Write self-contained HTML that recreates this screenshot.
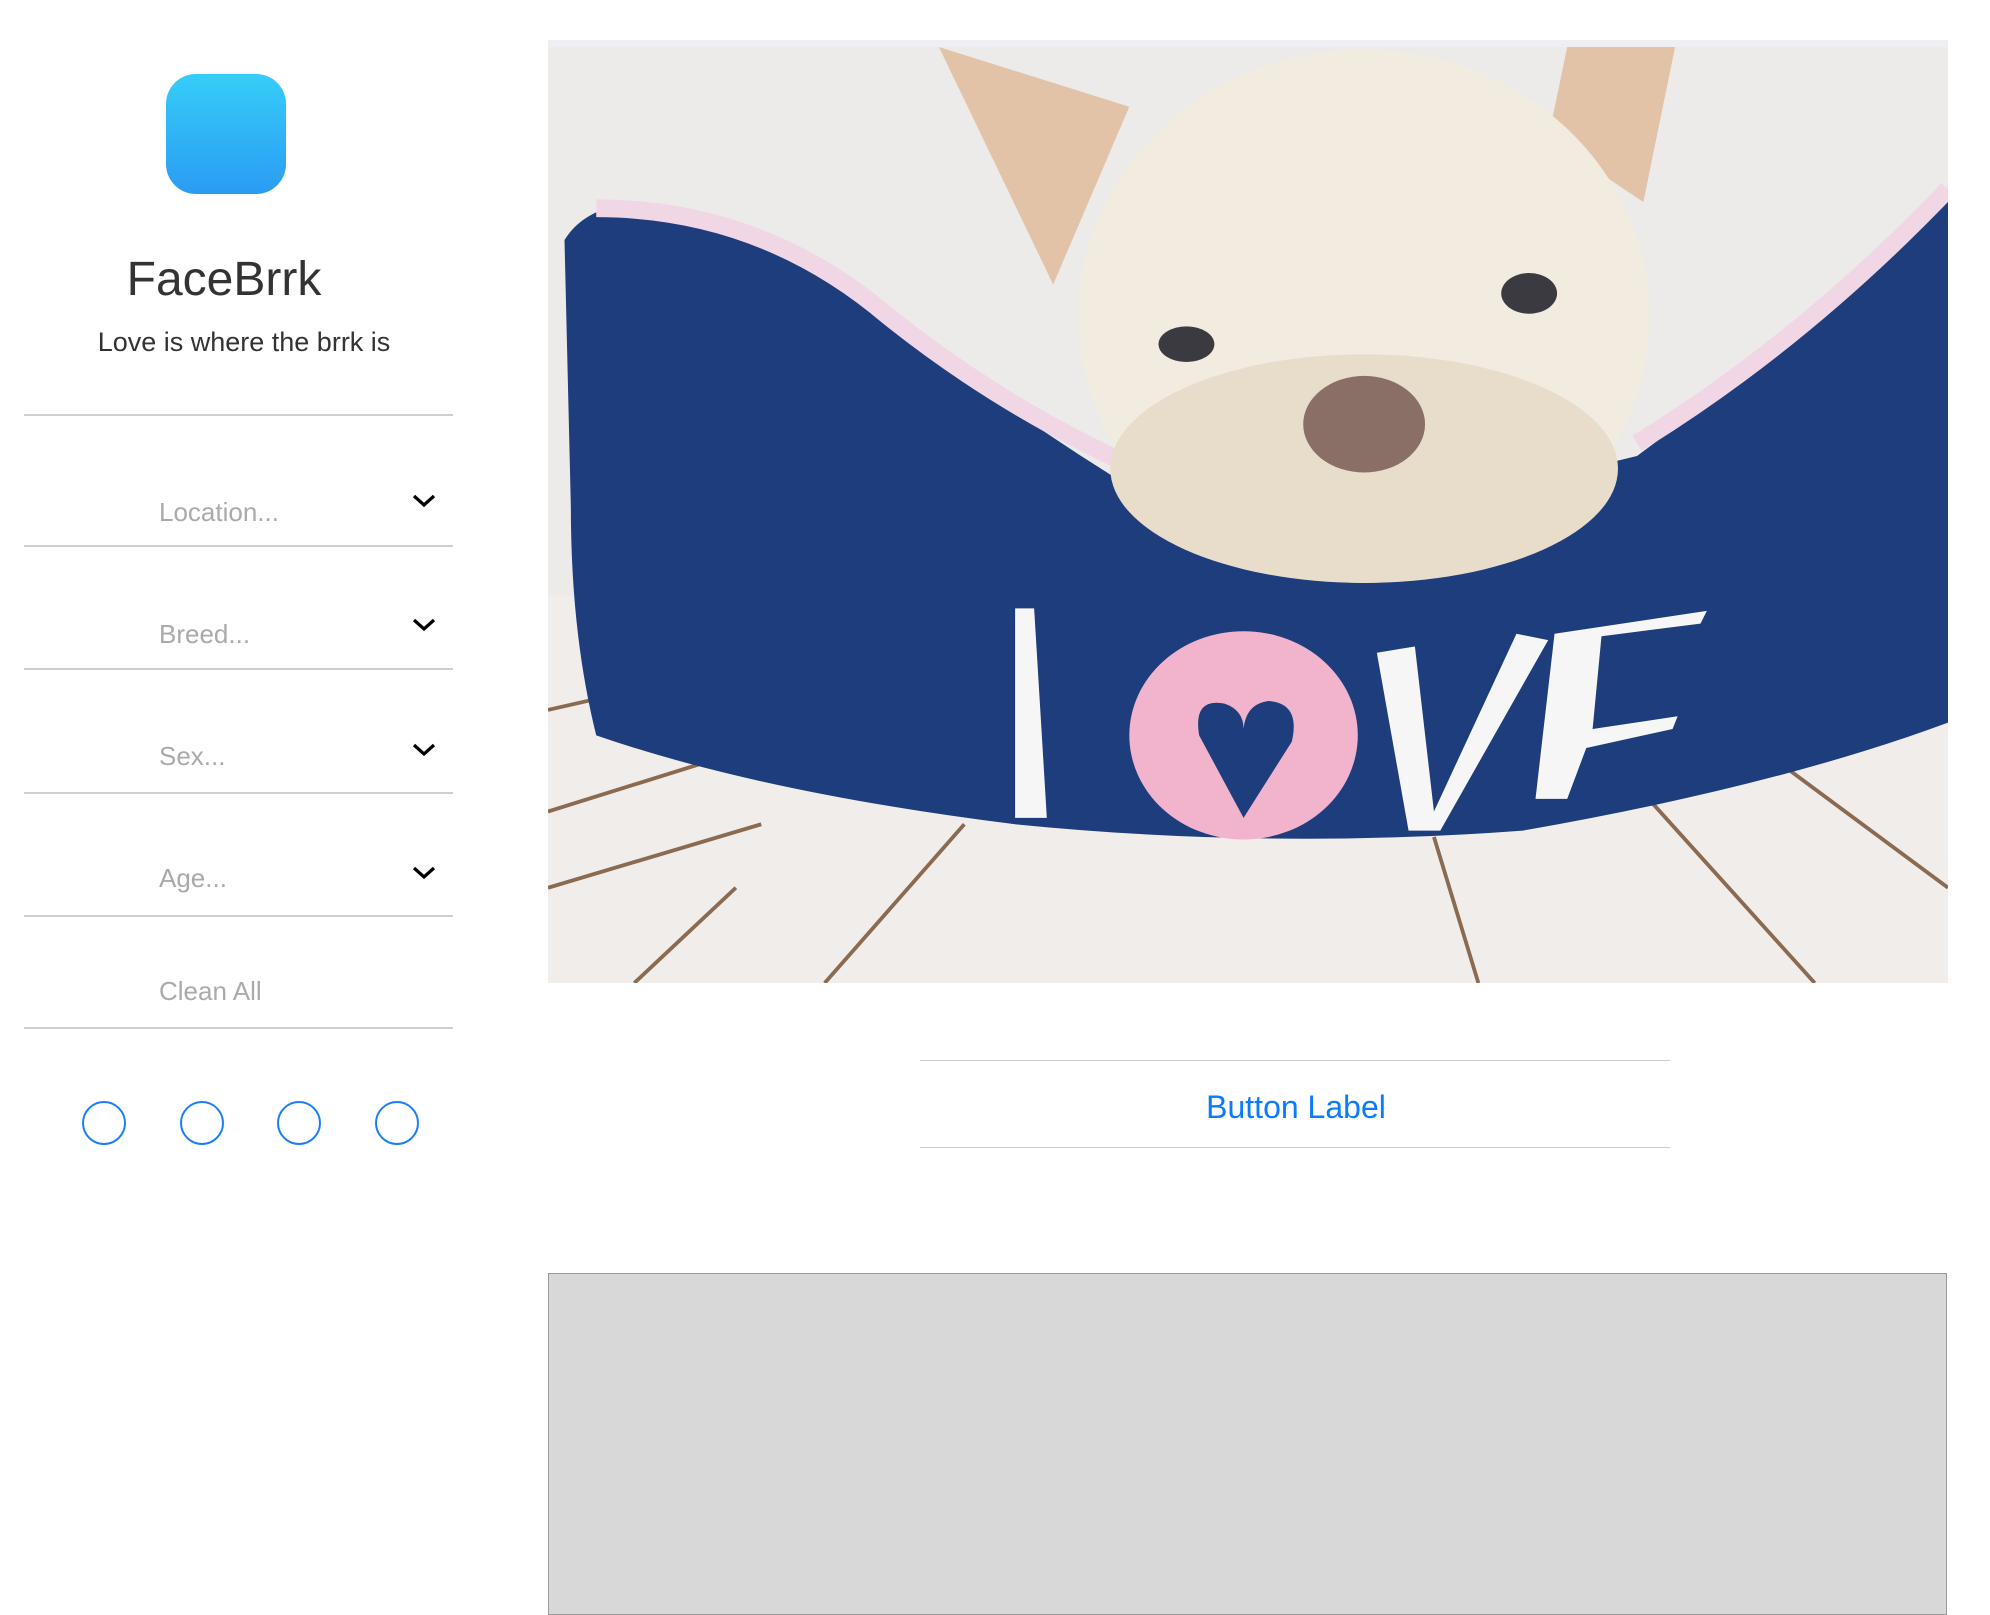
<!DOCTYPE html>
<html><head><meta charset="utf-8">
<style>
html,body{margin:0;padding:0;background:#fff;}
body{width:1990px;height:1598px;position:relative;overflow:hidden;font-family:"Liberation Sans",sans-serif;}
.abs{position:absolute;}
.icon{left:166px;top:74px;width:120px;height:120px;border-radius:30px;background:linear-gradient(#36cdf8,#2a9cf3);}
.title{left:0;width:448px;text-align:center;top:252px;font-size:48px;color:#333;}
.sub{left:0;width:488px;text-align:center;top:327px;font-size:27px;color:#333;}
.line{left:24px;width:429px;height:2px;background:#cfcfcf;}
.lbl{left:159px;font-size:26px;color:#aaa;}
.chev{left:412px;width:24px;height:14px;}
.circ{width:40px;height:40px;border:2.5px solid #1a7ef9;border-radius:50%;top:1101px;}
.btnline{left:920px;width:750px;height:1px;background:#ccc;}
.btn{left:920px;width:752px;text-align:center;top:1089px;font-size:32px;color:#0a7aff;}
.gray{left:548px;top:1273px;width:1397px;height:340px;background:#d8d8d8;border:1.5px solid #999;}
</style></head><body>
<div class="abs icon"></div>
<div class="abs title">FaceBrrk</div>
<div class="abs sub">Love is where the brrk is</div>

<div class="abs line" style="top:414px"></div>
<div class="abs line" style="top:545px"></div>
<div class="abs line" style="top:668px"></div>
<div class="abs line" style="top:792px"></div>
<div class="abs line" style="top:915px"></div>
<div class="abs line" style="top:1027px"></div>

<div class="abs lbl" style="top:497px">Location...</div>
<div class="abs lbl" style="top:619px">Breed...</div>
<div class="abs lbl" style="top:741px">Sex...</div>
<div class="abs lbl" style="top:863px">Age...</div>
<div class="abs lbl" style="top:976px">Clean All</div>

<svg class="abs chev" style="top:494px" viewBox="0 0 24 14"><path d="M2 2 L12 11 L22 2" fill="none" stroke="#000" stroke-width="3.2"/></svg>
<svg class="abs chev" style="top:618px" viewBox="0 0 24 14"><path d="M2 2 L12 11 L22 2" fill="none" stroke="#000" stroke-width="3.2"/></svg>
<svg class="abs chev" style="top:743px" viewBox="0 0 24 14"><path d="M2 2 L12 11 L22 2" fill="none" stroke="#000" stroke-width="3.2"/></svg>
<svg class="abs chev" style="top:866px" viewBox="0 0 24 14"><path d="M2 2 L12 11 L22 2" fill="none" stroke="#000" stroke-width="3.2"/></svg>

<div class="abs circ" style="left:82px"></div>
<div class="abs circ" style="left:180px"></div>
<div class="abs circ" style="left:277px"></div>
<div class="abs circ" style="left:375px"></div>

<div class="abs" style="left:548px;top:40px;width:1400px;height:7px;background:#eeeff3"></div>
<svg class="abs" style="left:548px;top:47px" width="1400" height="936" viewBox="432 38 1103 737" preserveAspectRatio="none">
<rect x="432" y="38" width="1103" height="737" fill="#ecebea"/>
<rect x="432" y="470" width="1103" height="305" fill="#f0edea"/>
<path d="M432 560 L520 540 M432 640 L560 600 M432 700 L600 650 M650 775 L760 650 M1130 660 L1165 775 M1290 620 L1430 775 M1400 600 L1535 700 M500 775 L580 700" stroke="#8a6a50" stroke-width="3" fill="none"/>
<path d="M445 190 Q460 165 500 160 Q600 170 700 250 Q800 330 900 390 L1000 430 L1290 360 Q1400 280 1535 150 L1535 570 Q1400 620 1200 655 Q1000 670 800 650 Q600 625 470 580 Q450 500 450 400 Z" fill="#1e3d7c"/>
<path d="M470 165 Q600 165 700 250 Q800 330 920 380" stroke="#f1d6e6" stroke-width="14" fill="none"/>
<path d="M1290 350 Q1420 270 1535 150" stroke="#f1d6e6" stroke-width="14" fill="none"/>
<path d="M740 38 L890 85 L830 225 Z" fill="#e2c3a8"/>
<path d="M1235 38 L1320 38 L1295 160 L1220 110 Z" fill="#e2c3a8"/>
<ellipse cx="1075" cy="250" rx="225" ry="210" fill="#f2ebe0"/>
<ellipse cx="1075" cy="370" rx="200" ry="90" fill="#e8dccb"/>
<ellipse cx="1075" cy="335" rx="48" ry="38" fill="#8a6f66"/>
<ellipse cx="935" cy="272" rx="22" ry="14" fill="#3a3a40"/>
<ellipse cx="1205" cy="232" rx="22" ry="16" fill="#3a3a40"/>
<path d="M800 480 L815 480 L825 645 L800 645 Z" fill="#f6f6f6"/>
<ellipse cx="980" cy="580" rx="90" ry="82" fill="#f2b3cc"/>
<path d="M980 645 L945 580 Q940 550 965 555 Q980 560 980 575 Q982 555 1000 553 Q1025 555 1018 585 Z" fill="#1e3d7c"/>
<path d="M1085 515 L1115 510 L1130 640 L1195 500 L1220 505 L1135 655 L1110 655 Z" fill="#f6f6f6"/>
<path d="M1225 500 L1345 482 L1340 492 L1262 502 L1255 575 L1322 565 L1318 575 L1250 590 L1235 630 L1210 630 Z" fill="#f6f6f6"/>
</svg>

<div class="abs btnline" style="top:1060px"></div>
<div class="abs btn">Button Label</div>
<div class="abs btnline" style="top:1147px"></div>

<div class="abs gray"></div>
</body></html>
